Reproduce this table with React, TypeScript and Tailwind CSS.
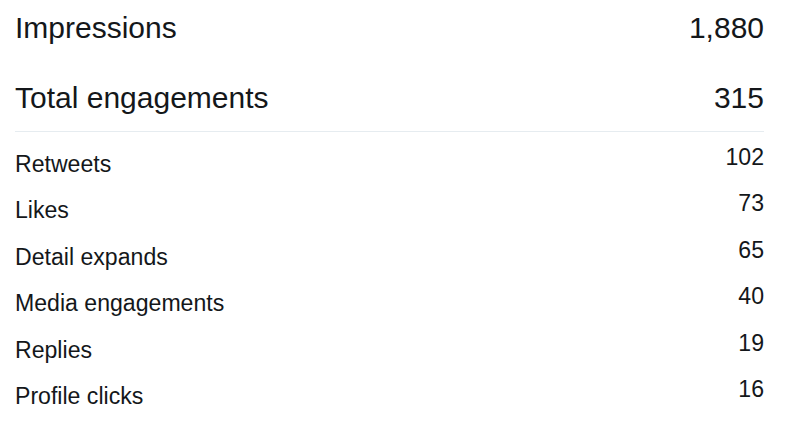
import React from 'react';

interface Metric {
  label: string;
  value: string;
}

const totals: Metric[] = [
  { label: 'Impressions', value: '1,880' },
  { label: 'Total engagements', value: '315' },
];

const breakdown: Metric[] = [
  { label: 'Retweets', value: '102' },
  { label: 'Likes', value: '73' },
  { label: 'Detail expands', value: '65' },
  { label: 'Media engagements', value: '40' },
  { label: 'Replies', value: '19' },
  { label: 'Profile clicks', value: '16' },
];

const BreakdownRow: React.FC<{ metric: Metric }> = ({ metric }) => (
  <li className="flex h-[46.4px] items-start justify-between">
    <span className="mt-[7px] leading-[26px]">{metric.label}</span>
    <span className="leading-[26px]">{metric.value}</span>
  </li>
);

export default function App() {
  return (
    <div className="min-h-[434px] w-full bg-white pl-[15px] pr-[36px] pt-[11px] font-['Liberation_Sans',Arial,sans-serif] text-[#14171a]">
      <div className="flex justify-between text-[30px] leading-[34px]">
        <span>{totals[0].label}</span>
        <span>{totals[0].value}</span>
      </div>
      <div className="mt-[36px] flex justify-between border-b border-[#e6ecf0] pb-[16px] text-[30px] leading-[34px]">
        <span>{totals[1].label}</span>
        <span>{totals[1].value}</span>
      </div>
      <ul className="mt-[12px] text-[23.1px]">
        {breakdown.map((m) => (
          <BreakdownRow key={m.label} metric={m} />
        ))}
      </ul>
    </div>
  );
}
